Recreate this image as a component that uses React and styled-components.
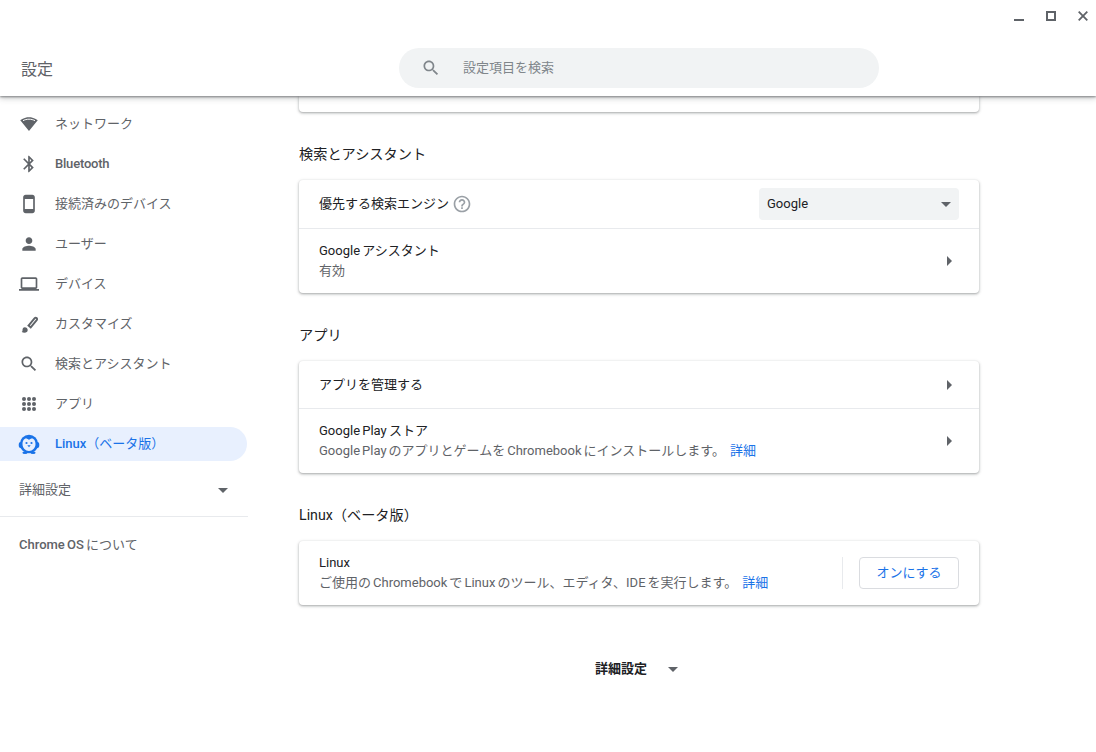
import React from 'react';
import styled, { createGlobalStyle } from 'styled-components';

const GlobalStyle = createGlobalStyle`
    html, body {
        margin: 0;
        padding: 0;
        height: 100%;
        background: #fff;
    }
    body {
        font-family: Roboto, "Noto Sans CJK JP", sans-serif;
        font-size: 13px;
        line-height: 20px;
        color: #202124;
    }
`;

const paths = {
    bluetooth: 'M17.71 7.71L12 2h-1v7.59L6.41 5 5 6.41 10.59 12 5 17.59 6.41 19 11 14.41V22h1l5.71-5.71-4.3-4.29 4.3-4.29zM13 5.83l1.88 1.88L13 9.59V5.83zm1.88 10.46L13 18.17v-3.76l1.88 1.88z',
    phone: 'M16 1H8C6.34 1 5 2.34 5 4v16c0 1.66 1.34 3 3 3h8c1.66 0 3-1.34 3-3V4c0-1.66-1.34-3-3-3zm1 17H7V6h10v12z',
    person: 'M12 12c2.21 0 4-1.79 4-4s-1.79-4-4-4-4 1.79-4 4 1.79 4 4 4zm0 2c-2.67 0-8 1.34-8 4v2h16v-2c0-2.66-5.33-4-8-4z',
    laptop: 'M20 18c1.1 0 1.99-.9 1.99-2L22 6c0-1.1-.9-2-2-2H4c-1.1 0-2 .9-2 2v10c0 1.1.9 2 2 2H0v2h24v-2h-4zM4 6h16v10H4V6z',
    search: 'M15.5 14h-.79l-.28-.27C15.41 12.59 16 11.11 16 9.5 16 5.91 13.09 3 9.5 3S3 5.91 3 9.5 5.91 16 9.5 16c1.61 0 3.09-.59 4.23-1.57l.27.28v.79l5 4.99L20.49 19l-4.99-5zm-6 0C7.01 14 5 11.99 5 9.5S7.01 5 9.5 5 14 7.01 14 9.5 11.99 14 9.5 14z',
    help: 'M11 18h2v-2h-2v2zm1-16C6.48 2 2 6.48 2 12s4.48 10 10 10 10-4.48 10-10S17.52 2 12 2zm0 18c-4.41 0-8-3.59-8-8s3.59-8 8-8 8 3.59 8 8-3.59 8-8 8zm0-14c-2.21 0-4 1.79-4 4h2c0-1.1.9-2 2-2s2 .9 2 2c0 2-3 1.75-3 5h2c0-2.25 3-2.5 3-5 0-2.21-1.79-4-4-4z'
};

const Icon = ({ name, size = 20 }) => (
    <svg width={size} height={size} viewBox="0 0 24 24" fill="currentColor">
        <path d={paths[name]} />
    </svg>
);

const WifiIcon = () => (
    <svg width="18" height="18" viewBox="0 0 24 24" fill="currentColor">
        <path d="M12.01 21.49L23.64 7c-.45-.34-4.93-4-11.64-4C5.28 3 .81 6.66.36 7l11.63 14.49.01.01.01-.01z" />
        <path d="M4 7.600C6.300 6.300 9 5.600 12 5.600s5.700.7 8 2" fill="none" stroke="#fff" strokeWidth="1.300" />
    </svg>
);

const BrushIcon = () => (
    <svg width="24" height="24" viewBox="0 0 24 24" fill="none">
        <path d="M11.500 13.600l6-7.200c.6-.7 1.500-.8 2.100-.3.600.5.700 1.400.1 2.100l-6 7.200c-.4-.3-.8-.7-1.100-1-.4-.3-.7-.5-1.100-.8z" stroke="currentColor" strokeWidth="1.900" />
        <path d="M7.800 15.200c1.700 0 2.900 1.300 2.900 2.800 0 1.700-1.300 2.800-3.200 2.800-1.100 0-2.100-.4-3-1 .9-.2 1-.8 1-1.600 0-1.700.8-3 2.300-3z" fill="currentColor" />
    </svg>
);

const AppsIcon = () => (
    <svg width="24" height="24" viewBox="0 0 24 24" fill="currentColor">
        {[7, 12, 17].map((y) =>
            [7, 12, 17].map((x) => <circle key={x + '-' + y} cx={x} cy={y} r="2" />)
        )}
    </svg>
);

const Penguin = () => (
    <svg width="24" height="24" viewBox="0 0 24 24">
        <ellipse cx="3.600" cy="13" rx="1.900" ry="3" fill="#1a73e8" />
        <ellipse cx="20.400" cy="13" rx="1.900" ry="3" fill="#1a73e8" />
        <ellipse cx="8" cy="20.800" rx="2.600" ry="1.200" fill="#1a73e8" />
        <ellipse cx="16" cy="20.800" rx="2.600" ry="1.200" fill="#1a73e8" />
        <circle cx="12" cy="12" r="9.200" fill="#1a73e8" />
        <path fill="#e8f0fe" d="M12 7.900c.9-1 2-1.500 3-1.500 2 0 3.500 2.300 3.500 5.600 0 4-3 6.900-6.500 6.900S5.500 16 5.500 12c0-3.300 1.500-5.600 3.500-5.600 1 0 2.100.5 3 1.500z" />
        <circle cx="9.500" cy="11" r="1.100" fill="#1a73e8" />
        <circle cx="14.500" cy="11" r="1.100" fill="#1a73e8" />
        <path fill="#1a73e8" d="M10.300 13.200h3.400L12 15.200z" />
    </svg>
);

const navItems = [
    { icon: <WifiIcon />, label: 'ネットワーク' },
    { icon: <Icon name="bluetooth" />, label: 'Bluetooth', medium: true },
    { icon: <Icon name="phone" />, label: '接続済みのデバイス' },
    { icon: <Icon name="person" />, label: 'ユーザー' },
    { icon: <Icon name="laptop" />, label: 'デバイス' },
    { icon: <BrushIcon />, label: 'カスタマイズ' },
    { icon: <Icon name="search" />, label: '検索とアシスタント' },
    { icon: <AppsIcon />, label: 'アプリ' }
];

export default function App() {
    return (
        <Page>
            <GlobalStyle />
            <Header>
                <WindowControls>
                    <Minimize />
                    <Maximize />
                    <Close>
                        <svg width="10" height="10" viewBox="0 0 10 10">
                            <path d="M.7.7l8.600 8.600M9.300.7L.7 9.300" stroke="#5f6368" strokeWidth="1.800" />
                        </svg>
                    </Close>
                </WindowControls>
                <TitleBar>
                    <AppTitle>設定</AppTitle>
                    <SearchBox>
                        <SearchIcon><Icon name="search" /></SearchIcon>
                        <Placeholder>設定項目を検索</Placeholder>
                    </SearchBox>
                </TitleBar>
            </Header>
            <Body>
                <Sidebar>
                    {navItems.map((item) => (
                        <NavItem key={item.label}>
                            <NavIcon>{item.icon}</NavIcon>
                            <NavLabel $medium={item.medium}>{item.label}</NavLabel>
                        </NavItem>
                    ))}
                    <NavItem $active>
                        <NavIcon $active><Penguin /></NavIcon>
                        <NavLabel $active><Latin>Linux</Latin>（ベータ版）</NavLabel>
                    </NavItem>
                    <AdvancedToggle>
                        詳細設定
                        <Caret />
                    </AdvancedToggle>
                    <SideDivider />
                    <AboutLink><Latin>Chrome OS</Latin> について</AboutLink>
                </Sidebar>
                <Main>
                    <Column>
                        <ClippedCard />

                        <SectionTitle>検索とアシスタント</SectionTitle>
                        <Card>
                            <Row>
                                <RowLabel>優先する検索エンジン</RowLabel>
                                <HelpIcon><Icon name="help" /></HelpIcon>
                                <Spacer />
                                <Select>
                                    Google
                                    <Caret />
                                </Select>
                            </Row>
                            <TallRow $divided>
                                <RowText>
                                    <RowLabel>Google アシスタント</RowLabel>
                                    <SubLabel>有効</SubLabel>
                                </RowText>
                                <Chevron />
                            </TallRow>
                        </Card>

                        <SectionTitle>アプリ</SectionTitle>
                        <Card>
                            <Row>
                                <RowLabel>アプリを管理する</RowLabel>
                                <Spacer />
                                <Chevron />
                            </Row>
                            <TallRow $divided>
                                <RowText>
                                    <RowLabel>Google Play ストア</RowLabel>
                                    <SubLabel>
                                        Google Play のアプリとゲームを Chromebook にインストールします。
                                        <MoreLink>詳細</MoreLink>
                                    </SubLabel>
                                </RowText>
                                <Chevron />
                            </TallRow>
                        </Card>

                        <SectionTitle>Linux（ベータ版）</SectionTitle>
                        <Card>
                            <TallRow>
                                <RowText>
                                    <RowLabel>Linux</RowLabel>
                                    <SubLabel>
                                        ご使用の Chromebook で Linux のツール、エディタ、IDE を実行します。
                                        <MoreLink>詳細</MoreLink>
                                    </SubLabel>
                                </RowText>
                                <VerticalRule />
                                <OutlineButton>オンにする</OutlineButton>
                            </TallRow>
                        </Card>

                        <AdvancedFooter>
                            詳細設定
                            <Caret />
                        </AdvancedFooter>
                    </Column>
                </Main>
            </Body>
        </Page>
    );
}

// Styles
const Page = styled.div`
    display: flex;
    flex-direction: column;
    width: 1096px;
    height: 752px;
    overflow: hidden;
    background: #fff;
`;

const Header = styled.header`
    position: relative;
    z-index: 2;
    flex: none;
    height: 96px;
    background: #fff;
    box-shadow: 0 1px 2px rgba(60, 64, 67, 0.55), 0 2px 6px rgba(60, 64, 67, 0.3);
`;

const WindowControls = styled.div`
    display: flex;
    justify-content: flex-end;
    align-items: center;
    gap: 22px;
    height: 32px;
    padding-right: 8px;
`;

const Minimize = styled.span`
    width: 10px;
    height: 2px;
    margin-top: 8px;
    background: #5f6368;
`;

const Maximize = styled.span`
    box-sizing: border-box;
    width: 10px;
    height: 10px;
    border: 2px solid #5f6368;
`;

const Close = styled.span`
    display: flex;
    width: 10px;
    height: 10px;
`;

const TitleBar = styled.div`
    display: flex;
    align-items: center;
    height: 56px;
    margin-top: 8px;
`;

const AppTitle = styled.h1`
    width: 378px;
    margin: 3px 0 0;
    padding-left: 21px;
    font-size: 16px;
    font-weight: 400;
    color: #5f6368;
`;

const SearchBox = styled.div`
    display: flex;
    align-items: center;
    width: 480px;
    height: 40px;
    border-radius: 20px;
    background: #f1f3f4;
`;

const SearchIcon = styled.span`
    display: flex;
    margin-left: 22px;
    color: #80868b;
`;

const Placeholder = styled.span`
    margin-left: 22px;
    color: #80868b;
`;

const Body = styled.div`
    display: flex;
    flex: 1;
    min-height: 0;
`;

const Sidebar = styled.nav`
    flex: none;
    box-sizing: border-box;
    width: 266px;
    padding-top: 8px;
`;

const NavItem = styled.div`
    display: flex;
    align-items: center;
    width: 247px;
    height: ${(p) => (p.$active ? '34px' : '40px')};
    margin: ${(p) => (p.$active ? '3px 0 2px' : '0')};
    border-radius: ${(p) => (p.$active ? '0 17px 17px 0' : '0')};
    background: ${(p) => (p.$active ? '#e8f0fe' : 'transparent')};
`;

const NavIcon = styled.span`
    display: flex;
    justify-content: center;
    align-items: center;
    width: 24px;
    height: 24px;
    margin-left: 17px;
    color: #5f6368;
`;

const NavLabel = styled.span`
    margin-left: 14px;
    color: ${(p) => (p.$active ? '#1a73e8' : '#5f6368')};
    font-weight: ${(p) => (p.$medium ? 500 : 400)};
    letter-spacing: ${(p) => (p.$medium ? '-0.2px' : '0')};
`;

const Latin = styled.span`
    font-weight: 500;
`;

const AdvancedToggle = styled.div`
    display: flex;
    justify-content: space-between;
    align-items: center;
    box-sizing: border-box;
    width: 228px;
    height: 40px;
    margin-top: 9px;
    padding-left: 19px;
    color: #5f6368;
`;

const Caret = styled.span`
    width: 0;
    height: 0;
    border-left: 5px solid transparent;
    border-right: 5px solid transparent;
    border-top: 5px solid #5f6368;
`;

const SideDivider = styled.div`
    width: 248px;
    height: 1px;
    margin-top: 6px;
    background: #e8eaed;
`;

const AboutLink = styled.div`
    margin-top: 18px;
    padding-left: 19px;
    word-spacing: -1px;
    color: #5f6368;
`;

const Main = styled.main`
    flex: 1;
    min-width: 0;
    padding-left: 33px;
`;

const Column = styled.div`
    width: 680px;
`;

const Card = styled.section`
    border-radius: 4px;
    background: #fff;
    box-shadow: 0 1px 2px rgba(60, 64, 67, 0.3), 0 1px 3px 1px rgba(60, 64, 67, 0.15);
`;

const ClippedCard = styled(Card)`
    height: 16px;
    border-radius: 0 0 4px 4px;
`;

const SectionTitle = styled.h2`
    height: 28px;
    margin: 28px 0 12px;
    font-size: 14.2px;
    font-weight: 400;
    line-height: 28px;
    color: #202124;
`;

const Row = styled.div`
    display: flex;
    align-items: center;
    box-sizing: border-box;
    min-height: 47px;
    padding: 8px 20px;
`;

const TallRow = styled(Row)`
    justify-content: space-between;
    height: ${(p) => (p.$divided ? '65px' : '64px')};
    border-top: ${(p) => (p.$divided ? '1px solid #e8eaed' : 'none')};
`;

const RowText = styled.div`
    flex: 1;
    min-width: 0;
`;

const RowLabel = styled.div`
    color: #202124;
    word-spacing: -1px;
`;

const SubLabel = styled.div`
    color: #5f6368;
    word-spacing: -1.2px;
`;

const MoreLink = styled.a`
    margin-left: 5px;
    color: #1a73e8;
`;

const HelpIcon = styled.span`
    display: flex;
    margin-left: 3px;
    color: #9aa0a6;
`;

const Spacer = styled.span`
    flex: 1;
`;

const Select = styled.div`
    display: flex;
    justify-content: space-between;
    align-items: center;
    box-sizing: border-box;
    width: 200px;
    height: 32px;
    padding: 0 8px;
    border-radius: 4px;
    background: #f1f3f4;
    color: #202124;
`;

const Chevron = styled.span`
    width: 0;
    height: 0;
    margin-right: 7px;
    border-top: 5px solid transparent;
    border-bottom: 5px solid transparent;
    border-left: 5px solid #5f6368;
`;

const VerticalRule = styled.span`
    width: 1px;
    height: 32px;
    margin-right: 16px;
    background: #e8eaed;
`;

const OutlineButton = styled.button`
    width: 100px;
    height: 32px;
    padding: 0;
    border: 1px solid #dadce0;
    border-radius: 4px;
    background: #fff;
    font: inherit;
    color: #1a73e8;
`;

const AdvancedFooter = styled.div`
    display: flex;
    justify-content: center;
    align-items: center;
    gap: 21px;
    height: 40px;
    margin-top: 44px;
    padding-right: 5px;
    font-weight: 700;
    color: #202124;
`;
